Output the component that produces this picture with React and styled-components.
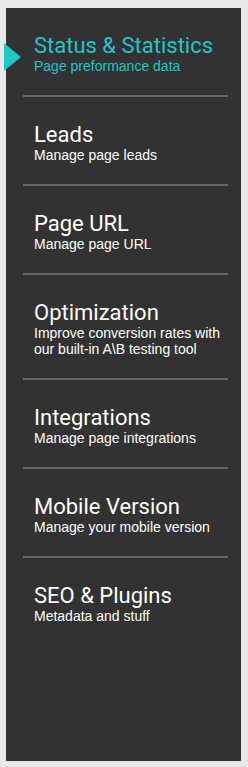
import styled, { createGlobalStyle } from "styled-components";

const GlobalStyle = createGlobalStyle`
    html, body {
        margin: 0;
        padding: 0;
        background-color: #e9e8e6;
    }
`

const Page = styled.div`
    padding: 8px 7px 6px 6px;
`

const Panel = styled.nav`
    width: 235px;
    height: 753px;
    background-color: #323232;
    display: flex;
    flex-direction: column;
`

const Item = styled.div`
    position: relative;
    margin: 0 13px 0 17px;
    padding: 25px 0 21px 11px;
    border-bottom: 2px solid #666;

    &:last-child {
        border-bottom: none;
    }
`

const Marker = styled.span`
    position: absolute;
    left: -19px;
    top: 35px;
    width: 0;
    height: 0;
    border-top: 14px solid transparent;
    border-bottom: 14px solid transparent;
    border-left: 17px solid #20c6c8;
`

const Title = styled.div`
    font-family: Roboto, "Liberation Sans", sans-serif;
    font-size: 22px;
    line-height: 25px;
    color: ${props => props.$active ? '#20c6c8' : '#fff'};
`

const Subtitle = styled.div`
    font-family: "Liberation Sans", Arial, sans-serif;
    font-size: 14px;
    line-height: 16px;
    color: ${props => props.$active ? '#20c6c8' : '#fff'};
`

const items = [
    { title: 'Status & Statistics', sub: 'Page preformance data', active: true },
    { title: 'Leads', sub: 'Manage page leads' },
    { title: 'Page URL', sub: 'Manage page URL' },
    { title: 'Optimization', sub: 'Improve conversion rates with our built-in A\\B testing tool' },
    { title: 'Integrations', sub: 'Manage page integrations' },
    { title: 'Mobile Version', sub: 'Manage your mobile version' },
    { title: 'SEO & Plugins', sub: 'Metadata and stuff' },
]

const App = () => {
    return (
        <>
            <GlobalStyle />
            <Page>
                <Panel>
                    {items.map(item => (
                        <Item key={item.title}>
                            {item.active && <Marker />}
                            <Title $active={item.active}>{item.title}</Title>
                            <Subtitle $active={item.active}>{item.sub}</Subtitle>
                        </Item>
                    ))}
                </Panel>
            </Page>
        </>
    )
}

export default App;
